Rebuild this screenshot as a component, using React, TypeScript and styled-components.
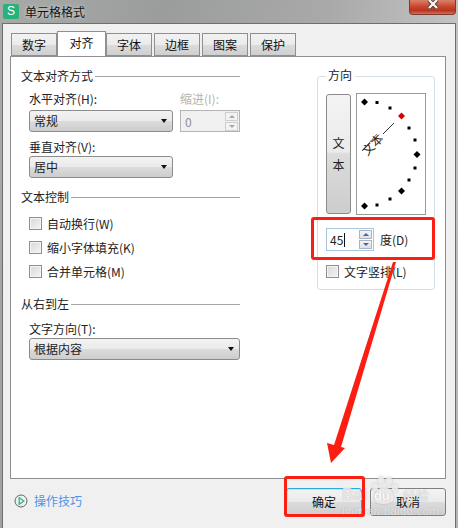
import React from "react";
import styled, { createGlobalStyle } from "styled-components";

const Global = createGlobalStyle`
  html, body { margin: 0; padding: 0; background: #b5b5b5; }
  body { font-family: "Noto Sans CJK SC", "Liberation Sans", sans-serif; font-size: 12px; color: #1c1c1c; }
`;
const Root = styled.div`
  position: relative; width: 458px; height: 528px; overflow: hidden; display: flex; flex-direction: column;
  background: linear-gradient(100deg, #a8aaa8 0%, #9b9d9c 30%, #a9a9a9 60%, #c4c4c4 85%, #b4b4b4 100%);
`;
const TitleBar = styled.div`height: 23px; display: flex; align-items: center; padding-left: 3px; gap: 6px; flex: none;`;
const Logo = styled.div`
  width: 16px; height: 15px; border-radius: 2px; background: #27b27c; color: #fff; font: 12px/15px "Liberation Sans", sans-serif; text-align: center;
`;
const TitleText = styled.div`font-size: 12px; line-height: 20px; color: #111; text-shadow: 0 0 4px rgba(255,255,255,.7);`;
const Close = styled.div`
  position: absolute; left: 409px; top: 0; width: 47px; height: 15px; border: 1px solid #7a3b30; border-top: none; border-radius: 0 0 4px 4px; box-sizing: border-box;
  background: linear-gradient(#d9806a 0%, #c9432b 50%, #b8351f 75%, #d16f58 100%);
  display: flex; justify-content: center;
`;
const Frame = styled.div`
  flex: 1; margin: 0 0 2px 2px; width: 454px; box-sizing: border-box; border: 1px solid #6e6e6e; background: #f0f0f0;
  padding: 8px 0 0 7px; display: flex; flex-direction: column;
`;
const Tabs = styled.div`display: flex; align-items: flex-end; height: 24px; padding-left: 1px; gap: 2px;`;
const Tab = styled.div<{ $active?: boolean }>`
  box-sizing: border-box; width: ${p => (p.$active ? 49 : 46)}px; height: ${p => (p.$active ? 25 : 23)}px; margin-left: ${p => (p.$active ? -2 : 0)}px; margin-right: ${p => (p.$active ? -2 : 0)}px;
  position: relative; z-index: ${p => (p.$active ? 2 : 0)};
  border: 1px solid #8e8f90; border-bottom: ${p => (p.$active ? "none" : "1px solid #8e8f90")};
  background: ${p => (p.$active ? "#fff" : "linear-gradient(#f2f2f2 0%, #ebebeb 50%, #dcdcdc 51%, #cfcfcf 100%)")};
  text-align: center; line-height: ${p => (p.$active ? 21 : 22)}px; font-size: 12px; color: #111;
`;
const Panel = styled.div`
  width: 436px; height: 423px; box-sizing: border-box; border: 1px solid #8e8f90; background: #fff; display: flex; padding: 11px 0 0 10px; gap: 77px;
`;
const LeftCol = styled.div`width: 219px; display: flex; flex-direction: column; flex: none;`;
const Legend = styled.div<{ $top?: number }>`
  display: flex; align-items: center; gap: 2px; height: 16px; margin-top: ${p => p.$top ?? 0}px; line-height: 16px; color: #222;
  &::after { content: ""; flex: 1; height: 1px; background: #a5a5a5; }
`;
const Row = styled.div`display: flex; gap: 7px; padding-left: 8px;`;
const Field = styled.div`display: flex; flex-direction: column;`;
const Label = styled.div<{ $dim?: boolean; $top?: number; $bottom?: number; $left?: number }>`
  height: 17px; line-height: 17px; margin-top: ${p => p.$top ?? 0}px; margin-bottom: ${p => p.$bottom ?? 0}px; margin-left: ${p => p.$left ?? 0}px; color: ${p => (p.$dim ? "#b4b4b4" : "#222")};
`;
const Select = styled.div<{ $w: number; $left?: number }>`
  box-sizing: border-box; width: ${p => p.$w}px; height: 22px; margin-left: ${p => p.$left ?? 0}px; padding: 0 5px 1px 4px; border: 1px solid #8b8b8b; border-radius: 3px;
  background: linear-gradient(#f3f3f3 0%, #ebebeb 48%, #dcdcdc 50%, #cdcdcd 100%);
  display: flex; align-items: center; justify-content: space-between; color: #222; line-height: 20px;
  &::after { content: ""; border: 4px solid transparent; border-top: 4px solid #111; border-left-width: 3.5px; border-right-width: 3.5px; margin-top: 4px; }
`;
const DimSpin = styled.div`
  box-sizing: border-box; width: 60px; height: 22px; border: 1px solid #b5b5b5; background: #f0f0f0; display: flex; align-items: center; justify-content: space-between; padding: 0 1px 0 4px; color: #8f8f8f;
`;
const Arrows = styled.div`display: flex; flex-direction: column; gap: 1px; flex: none;`;
const ArrowBtn = styled.div<{ $down?: boolean; $on?: boolean }>`
  box-sizing: border-box; width: 13px; height: 9px; border: 1px solid ${p => (p.$on ? "#a9b4c4" : "#cfcfcf")};
  background: ${p => (p.$on ? "linear-gradient(#f2f4f8,#dde1e8)" : "#f3f3f3")};
  display: flex; align-items: center; justify-content: center;
  &::before { content: ""; border-left: 3px solid transparent; border-right: 3px solid transparent; ${p => (p.$down ? "border-top" : "border-bottom")}: 3px solid ${p => (p.$on ? "#4a63a8" : "#a8a8a8")}; }
`;
const CheckRow = styled.div<{ $top?: number; $left?: number }>`
  display: flex; align-items: center; gap: 5px; height: 17px; margin-top: ${p => p.$top ?? 0}px; margin-left: ${p => p.$left ?? 8}px; color: #222;
`;
const Check = styled.div`
  box-sizing: border-box; width: 13px; height: 13px; border: 1px solid #8f8f8f; background: linear-gradient(135deg, #d8d8d8, #f4f4f4); box-shadow: inset 0 0 0 1px #f4f4f4;
`;
const Group = styled.div`
  box-sizing: border-box; width: 118px; height: 214px; margin-top: 8px; margin-left: 0; border: 1px solid #d6dfe6; border-radius: 3px; padding: 16px 0 0 8px; position: relative; flex: none;
`;
const GroupLabel = styled.div`position: absolute; left: 8px; top: -10px; background: #fff; padding: 0 3px 0 2px; line-height: 16px; color: #222;`;
const DialRow = styled.div`display: flex; gap: 5px;`;
const TextBtn = styled.div`
  box-sizing: border-box; width: 25px; height: 120px; border: 1px solid #8b8b8b; border-radius: 3px; background: linear-gradient(#f3f3f3 0%, #ebebeb 48%, #dcdcdc 50%, #cdcdcd 100%);
  display: flex; flex-direction: column; align-items: center; justify-content: center; line-height: 22px; color: #222; margin-top: 1px;
`;
const Dial = styled.svg`width: 70px; height: 122px; display: block; flex: none;`;
const DegRow = styled.div`display: flex; align-items: center; gap: 6px; margin-top: 13px; padding-bottom: 1px; line-height: 16px;`;
const DegInput = styled.div`
  box-sizing: border-box; width: 48px; height: 23px; border: 1px solid #a6c5de; background: #fff; display: flex; align-items: center; justify-content: space-between; padding: 0 1px 0 3px; color: #222; font-size: 12px;
`;
const Caret = styled.span`display: inline-block; width: 1px; height: 14px; background: #111; margin-left: 1px; vertical-align: -2px;`;
const Bottom = styled.div`display: flex; height: 49px; align-items: flex-start; position: relative;`;
const Tips = styled.div`position: absolute; left: 4px; top: 14px; display: flex; align-items: center; gap: 6px; color: #4d94ea; line-height: 16px;`;
const Buttons = styled.div`display: flex; gap: 8px; margin-left: 276px; margin-top: 9px;`;
const Btn = styled.div<{ $primary?: boolean }>`
  box-sizing: border-box; width: 76px; height: 28px; border: 1px solid ${p => (p.$primary ? "#2fa9dc" : "#7f7f7f")}; border-radius: 3px;
  background: linear-gradient(#f3f3f3 0%, #ebebeb 48%, #dcdcdc 50%, #cdcdcd 100%);
  text-align: center; line-height: 25px; color: #111;
  ${p => p.$primary ? "box-shadow: inset 0 0 0 1px #bfe6f6;" : ""}
`;
const RedBox = styled.div<{ $x: number; $y: number; $w: number; $h: number }>`
  position: absolute; left: ${p => p.$x}px; top: ${p => p.$y}px; width: ${p => p.$w}px; height: ${p => p.$h}px; box-sizing: border-box; border: 3px solid #fa1f12; border-radius: 3px; pointer-events: none;
`;
const ArrowMark = styled.svg`position: absolute; left: 0; top: 0; width: 458px; height: 528px; pointer-events: none;`;
const Mark = styled.div`
  position: absolute; left: 342px; top: 473px; width: 112px; height: 46px; color: rgba(240,240,240,.85); pointer-events: none;
  text-shadow: 0 0 1px rgba(130,130,130,.55);
`;
const MarkPaw = styled.svg`position: absolute; left: 27px; top: 2px; width: 30px; height: 30px; filter: drop-shadow(0 0 1px rgba(130,130,130,.5));`;
const MarkBrand = styled.div`position: absolute; left: 0; top: 13px; font: bold 16px/18px "Liberation Sans", sans-serif; display: flex; align-items: baseline;`;
const MarkDu = styled.span`margin-left: 7px; font-size: 13px; color: rgba(255,255,255,.95);`;
const MarkCn = styled.span`margin-left: 13px; font: 13px/18px "Noto Sans CJK SC", sans-serif;`;
const MarkUrl = styled.div`position: absolute; left: 0; top: 32px; font: 11.5px/13px "Liberation Sans", sans-serif; letter-spacing: .25px;`;

const sq: [number, number][] = [[378,101.5],[391,107],[410,127],[416,139],[416,167],[410,179],[391,198],[378,204]];
const dia: [number, number, string][] = [[365.5,101,"#000"],[402.5,115,"#d80000"],[418,153.5,"#000"],[402.5,190,"#000"],[365.5,205,"#000"]];

export default function App() {
  return (
    <Root>
      <Global />
      <TitleBar><Logo>S</Logo><TitleText>单元格格式</TitleText></TitleBar>
      <Close>
        <svg width="14" height="11" viewBox="0 0 14 11"><path d="M3 0 L11 8 M11 0 L3 8" stroke="#4a3a38" strokeWidth="4" /><path d="M3 0 L11 8 M11 0 L3 8" stroke="#f4f4f4" strokeWidth="2.4" /></svg>
      </Close>
      <Frame>
        <Tabs>
          <Tab>数字</Tab><Tab $active>对齐</Tab><Tab>字体</Tab><Tab>边框</Tab><Tab>图案</Tab><Tab>保护</Tab>
        </Tabs>
        <Panel>
          <LeftCol>
            <Legend>文本对齐方式</Legend>
            <Row>
              <Field><Label $top={6} $bottom={3}>水平对齐(H):</Label><Select $w={144}>常规</Select></Field>
              <Field><Label $dim $top={6} $bottom={3}>缩进(I):</Label>
                <DimSpin>0<Arrows><ArrowBtn /><ArrowBtn $down /></Arrows></DimSpin></Field>
            </Row>
            <Label $top={6} $bottom={1} $left={8}>垂直对齐(V):</Label>
            <Select $w={144} $left={8}>居中</Select>
            <Legend $top={11}>文本控制</Legend>
            <CheckRow $top={10}><Check />自动换行(W)</CheckRow>
            <CheckRow $top={7}><Check />缩小字体填充(K)</CheckRow>
            <CheckRow $top={7}><Check />合并单元格(M)</CheckRow>
            <Legend $top={16}>从右到左</Legend>
            <Label $top={8} $bottom={1} $left={8}>文字方向(T):</Label>
            <Select $w={211} $left={8}>根据内容</Select>
          </LeftCol>
          <Group>
            <GroupLabel>方向</GroupLabel>
            <DialRow>
              <TextBtn><span>文</span><span>本</span></TextBtn>
              <Dial viewBox="357 92 70 122">
                <rect x="357.5" y="92.5" width="69" height="121" fill="#fff" stroke="#9a9a9a" />
                {sq.map(([x, y]) => <rect key={`${x}-${y}`} x={x - 1.5} y={y - 1.5} width="3" height="3" fill="#000" />)}
                {dia.map(([x, y, c]) => <polygon key={`${x}-${y}`} points={`${x},${y - 3.5} ${x + 3.5},${y} ${x},${y + 3.5} ${x - 3.5},${y}`} fill={c} />)}
                <line x1="384" y1="133" x2="395" y2="122" stroke="#333" strokeWidth="1" />
                <line x1="363" y1="150" x2="378" y2="133" stroke="#334" strokeWidth=".7" />
                <text x="374" y="148" fontSize="12" fill="#222" fontFamily='"Noto Sans CJK SC", sans-serif' transform="rotate(-45 374 144)" textAnchor="middle">文本</text>
              </Dial>
            </DialRow>
            <DegRow>
              <DegInput><span>45<Caret /></span><Arrows><ArrowBtn $on /><ArrowBtn $on $down /></Arrows></DegInput>
              度(D)
            </DegRow>
            <CheckRow $top={11} $left={0}><Check />文字竖排(L)</CheckRow>
          </Group>
        </Panel>
        <Bottom>
          <Tips>
            <svg width="14" height="14" viewBox="0 0 14 14"><circle cx="7" cy="7" r="6" fill="none" stroke="#666" strokeWidth="1" /><path d="M5.2 3.8 L9.8 7 L5.2 10.2 Z" fill="none" stroke="#2fb886" strokeWidth="1.3" /></svg>
            操作技巧
          </Tips>
          <Buttons><Btn $primary>确定</Btn><Btn>取消</Btn></Buttons>
        </Bottom>
      </Frame>
      <Mark>
        <MarkPaw viewBox="0 0 30 30" fill="currentColor">
          <ellipse cx="6" cy="12" rx="3" ry="4" /><ellipse cx="12" cy="5" rx="3" ry="4" /><ellipse cx="20" cy="6" rx="3" ry="4" /><ellipse cx="26" cy="13" rx="3" ry="4" />
          <path d="M15 12 C21 12 27 21 24 26 C21 30 9 30 6 26 C3 21 9 12 15 12 Z" />
        </MarkPaw>
        <MarkBrand>Bai<MarkDu>du</MarkDu><MarkCn>经验</MarkCn></MarkBrand>
        <MarkUrl>jingyan.baidu.com</MarkUrl>
      </Mark>
      <RedBox $x={311} $y={217} $w={124} $h={43} />
      <RedBox $x={284} $y={476} $w={81} $h={41} />
      <ArrowMark viewBox="0 0 458 528">
        <polygon points="393,262 396,262 341,447 345,448 331,463 327,443 334,445" fill="#fa1f12" />
      </ArrowMark>
    </Root>
  );
}
